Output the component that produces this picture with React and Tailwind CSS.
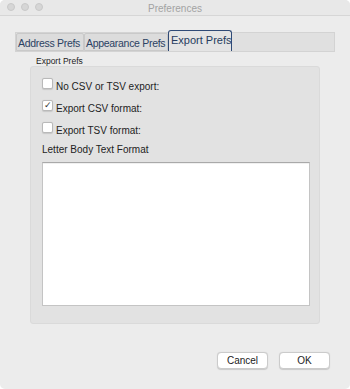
import React from 'react';

function Checkbox({ checked }) {
  return (
    <span className="w-[11px] h-[11px] shrink-0 rounded-[2px] bg-white border border-[#b9b9b9] shadow-[0_0.5px_1px_rgba(0,0,0,0.12)] flex items-center justify-center text-[9px] leading-none text-[#333]">
      {checked ? '✓' : ''}
    </span>
  );
}

function CheckRow({ label, checked }) {
  return (
    <div className="h-[22px] flex items-start gap-[3px]">
      <Checkbox checked={checked} />
      <span className="mt-[3px] text-[10px] leading-[12px] text-[#222]">{label}</span>
    </div>
  );
}

function Tab({ label, width, active }) {
  if (active) {
    return (
      <div
        className="h-[21px] -mt-px shrink-0 overflow-hidden whitespace-nowrap pl-[2px] bg-[#e4e4e4] border-[1.5px] border-b-0 border-[#2f4a76] rounded-t-[3px] text-[11px] leading-[19px] text-[#263c5e]"
        style={{ width }}
      >
        {label}
      </div>
    );
  }
  return (
    <div
      className="h-full shrink-0 overflow-hidden whitespace-nowrap pl-[1px] bg-[#dcdcdc] border border-[#c9c9c9] rounded-t-[2px] text-[10.5px] tracking-[-0.3px] leading-[18px] text-[#2b4263]"
      style={{ width }}
    >
      {label}
    </div>
  );
}

export default function App() {
  return (
    <div className="w-[350px] h-[389px] bg-[#ececec] rounded-[5px] overflow-hidden flex flex-col font-['Liberation_Sans',Arial,sans-serif]">
      {/* title bar */}
      <div className="h-[16px] shrink-0 grid grid-cols-[1fr_auto_1fr] items-center bg-[#e8e8e8] border-b border-[#d6d6d6]">
        <div className="flex items-center gap-[6px] pl-[7px] -mt-[1px]">
          <span className="w-[8px] h-[8px] rounded-full bg-[#d6d6d6] border border-[#c8c8c8]" />
          <span className="w-[8px] h-[8px] rounded-full bg-[#d6d6d6] border border-[#c8c8c8]" />
          <span className="w-[8px] h-[8px] rounded-full bg-[#d6d6d6] border border-[#c8c8c8]" />
        </div>
        <div className="text-[10px] leading-none text-[#a3a3a3] mt-[2px]">Preferences</div>
        <div />
      </div>

      {/* tab strip */}
      <div className="mt-[16px] ml-[15px] w-[320px] h-[20px] flex items-end bg-[#e0e0e0] border border-[#d3d3d3]">
        <Tab label="Address Prefs" width={68} />
        <Tab label="Appearance Prefs" width={84} />
        <Tab label="Export Prefs" width={64} active />
      </div>

      {/* group */}
      <div className="mt-[4px] ml-[36px] text-[8.5px] leading-[10px] text-[#222]">Export Prefs</div>
      <div className="ml-[30px] w-[290px] h-[258px] bg-[#e2e2e2] rounded-[3px] border border-[#dadada] pt-[11px] pl-[11px]">
        <CheckRow label="No CSV or TSV export:" />
        <CheckRow label="Export CSV format:" checked />
        <CheckRow label="Export TSV format:" />
        <div className="text-[10px] leading-[12px] text-[#222]">Letter Body Text Format</div>
        <div className="mt-[6px] w-[268px] h-[144px] bg-white border border-[#c4c4c4] border-t-[#a9a9a9] shadow-[inset_0_1px_0_rgba(0,0,0,0.06)]" />
      </div>

      {/* buttons */}
      <div className="mt-[28px] flex justify-end gap-[11px] pr-[20px]">
        <button className="w-[51px] h-[17px] rounded-[4px] bg-white border border-[#cbcbcb] shadow-[0_0.5px_1px_rgba(0,0,0,0.15)] text-[10px] leading-none text-[#222]">
          Cancel
        </button>
        <button className="w-[51px] h-[17px] rounded-[4px] bg-white border border-[#cbcbcb] shadow-[0_0.5px_1px_rgba(0,0,0,0.15)] text-[10px] leading-none text-[#222]">
          OK
        </button>
      </div>
    </div>
  );
}
